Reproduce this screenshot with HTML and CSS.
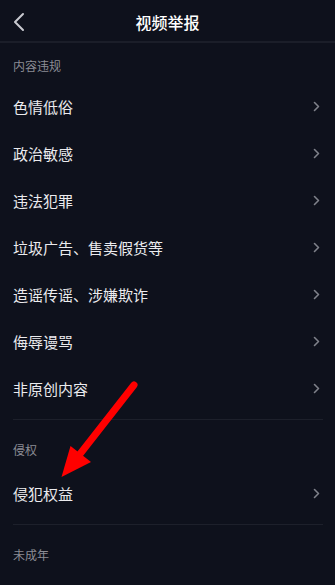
FILE: index.html
```html
<!DOCTYPE html>
<html lang="zh-CN">
<head>
<meta charset="utf-8">
<title>视频举报</title>
<link rel="stylesheet" href="styles.css">
</head>
<body>
<div class="page">
  <header class="topbar">
    <svg class="back" width="12" height="20" viewBox="0 0 12 20"><polyline points="10,2 2,10 10,18" fill="none" stroke="#c9cad0" stroke-width="2" stroke-linecap="round" stroke-linejoin="round"/></svg>
    <h1 class="title">视频举报</h1>
  </header>

  <section class="section first">
    <div class="label">内容违规</div>
    <ul class="list">
      <li class="item"><span>色情低俗</span><svg class="chev" width="7" height="11" viewBox="0 0 7 11"><polyline points="1.5,1.5 5.5,5.5 1.5,9.5" fill="none" stroke="#7f818a" stroke-width="1.6" stroke-linecap="round" stroke-linejoin="round"/></svg></li>
      <li class="item"><span>政治敏感</span><svg class="chev" width="7" height="11" viewBox="0 0 7 11"><polyline points="1.5,1.5 5.5,5.5 1.5,9.5" fill="none" stroke="#7f818a" stroke-width="1.6" stroke-linecap="round" stroke-linejoin="round"/></svg></li>
      <li class="item"><span>违法犯罪</span><svg class="chev" width="7" height="11" viewBox="0 0 7 11"><polyline points="1.5,1.5 5.5,5.5 1.5,9.5" fill="none" stroke="#7f818a" stroke-width="1.6" stroke-linecap="round" stroke-linejoin="round"/></svg></li>
      <li class="item"><span>垃圾广告、售卖假货等</span><svg class="chev" width="7" height="11" viewBox="0 0 7 11"><polyline points="1.5,1.5 5.5,5.5 1.5,9.5" fill="none" stroke="#7f818a" stroke-width="1.6" stroke-linecap="round" stroke-linejoin="round"/></svg></li>
      <li class="item"><span>造谣传谣、涉嫌欺诈</span><svg class="chev" width="7" height="11" viewBox="0 0 7 11"><polyline points="1.5,1.5 5.5,5.5 1.5,9.5" fill="none" stroke="#7f818a" stroke-width="1.6" stroke-linecap="round" stroke-linejoin="round"/></svg></li>
      <li class="item"><span>侮辱谩骂</span><svg class="chev" width="7" height="11" viewBox="0 0 7 11"><polyline points="1.5,1.5 5.5,5.5 1.5,9.5" fill="none" stroke="#7f818a" stroke-width="1.6" stroke-linecap="round" stroke-linejoin="round"/></svg></li>
      <li class="item"><span>非原创内容</span><svg class="chev" width="7" height="11" viewBox="0 0 7 11"><polyline points="1.5,1.5 5.5,5.5 1.5,9.5" fill="none" stroke="#7f818a" stroke-width="1.6" stroke-linecap="round" stroke-linejoin="round"/></svg></li>
    </ul>
  </section>

  <section class="section">
    <div class="label">侵权</div>
    <ul class="list">
      <li class="item"><span>侵犯权益</span><svg class="chev" width="7" height="11" viewBox="0 0 7 11"><polyline points="1.5,1.5 5.5,5.5 1.5,9.5" fill="none" stroke="#7f818a" stroke-width="1.6" stroke-linecap="round" stroke-linejoin="round"/></svg></li>
    </ul>
  </section>

  <section class="section last">
    <div class="label">未成年</div>
  </section>

  <svg class="arrow" width="335" height="585" viewBox="0 0 335 585">
    <line x1="134" y1="385" x2="80" y2="454" stroke="#ff0000" stroke-width="7" stroke-linecap="round"/>
    <polygon points="61.5,477 70.5,446 91,462" fill="#ff0000"/>
  </svg>
</div>
</body>
</html>
```

FILE: styles.css
```css
* { box-sizing: border-box; }
html, body {
  margin: 0;
  padding: 0;
  background: #0e111c;
}
body {
  font-family: "Noto Sans CJK SC", "Noto Sans", sans-serif;
  color: #e9e9ec;
}
.page {
  position: relative;
  width: 335px;
  height: 585px;
  overflow: hidden;
  background: #0e111c;
}
.topbar {
  height: 43px;
  border-bottom: 2px solid #1b1e29;
  display: flex;
  align-items: center;
  justify-content: center;
  position: relative;
}
.back {
  position: absolute;
  left: 13px;
  top: 12px;
}
.title {
  margin: 0;
  font-size: 16px;
  font-weight: 500;
  color: #ffffff;
  line-height: 20px;
  margin-top: 2px;
}
.section {
  margin: 0 12px 0 13px;
  border-bottom: 1px solid #1d202b;
  padding-bottom: 7px;
}
.section.last {
  border-bottom: none;
}
.label {
  font-size: 12px;
  line-height: 12px;
  color: #8b8c94;
  padding: 24px 0 14px;
}
.section.first .label {
  padding: 17px 0 11px;
}
.list {
  list-style: none;
  margin: 0;
  padding: 0;
}
.item {
  height: 47px;
  display: flex;
  align-items: center;
  justify-content: space-between;
  font-size: 15px;
  line-height: 20px;
  color: #ebebee;
}
.chev {
  margin-right: 3px;
}
.arrow {
  position: absolute;
  left: 0;
  top: 0;
  pointer-events: none;
}
```
